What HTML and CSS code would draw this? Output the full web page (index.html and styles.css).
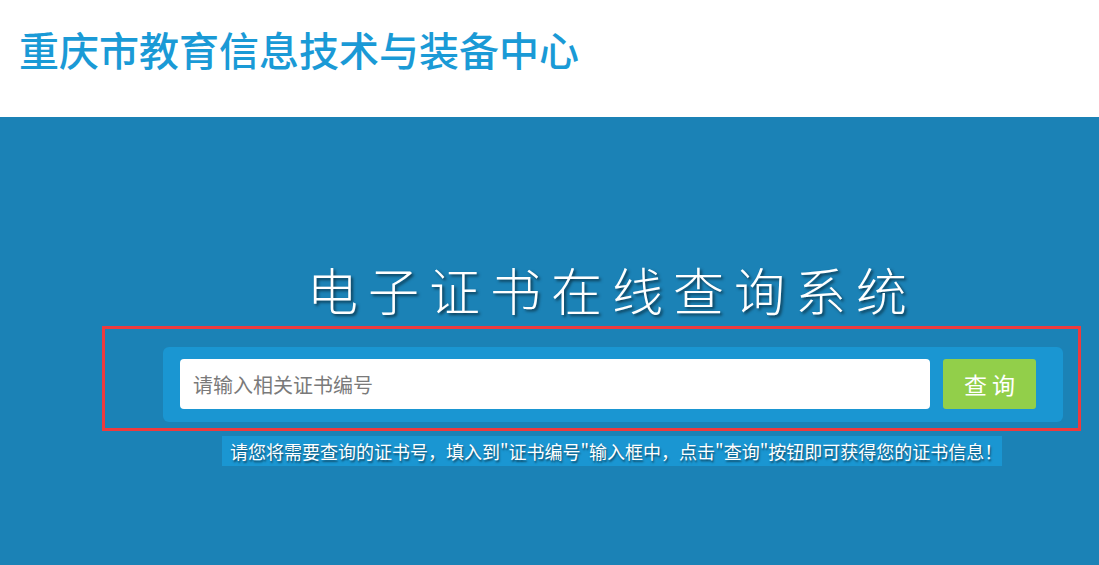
FILE: index.html
```html
<!DOCTYPE html>
<html lang="zh-CN">
<head>
<meta charset="utf-8">
<title>电子证书在线查询系统</title>
<link rel="stylesheet" href="styles.css">
</head>
<body>
<header class="top">
  <h1 class="org">重庆市教育信息技术与装备中心</h1>
</header>
<main class="stage">
  <h2 class="sys-title">电子证书在线查询系统</h2>
  <div class="frame">
    <form class="panel" onsubmit="return false;">
      <input class="search" type="text" placeholder="请输入相关证书编号">
      <button class="btn" type="submit">查 询</button>
    </form>
  </div>
  <p class="hint">请您将需要查询的证书号，填入到"证书编号"输入框中，点击"查询"按钮即可获得您的证书信息！</p>
</main>
</body>
</html>
```
FILE: styles.css
```css
html, body {
  margin: 0;
  padding: 0;
  height: 100%;
}
body {
  font-family: "Noto Sans CJK SC", "Noto Sans", sans-serif;
  background: #1b82b6;
  overflow: hidden;
}
.top {
  background: #ffffff;
  height: 117px;
  display: flex;
  align-items: flex-start;
  padding-left: 19px;
}
.org {
  margin: 21px 0 0;
  font-size: 40px;
  line-height: 56px;
  font-weight: 500;
  color: #1a9ad6;
}
.stage {
  display: flex;
  flex-direction: column;
  align-items: flex-start;
  padding-top: 137px;
}
.sys-title {
  margin: 0 0 2px 307px;
  font-size: 51px;
  line-height: 70px;
  font-weight: 300;
  letter-spacing: 10px;
  color: #ffffff;
  text-shadow: 2px 2px 3px rgba(0, 0, 0, 0.55);
}
.frame {
  margin-left: 102px;
  border: 3px solid #ef3a3d;
  padding: 18px 15px 6px 58px;
}
.panel {
  margin: 0;
  background: #1a96d2;
  border-radius: 6px;
  height: 75px;
  width: 900px;
  box-sizing: border-box;
  padding: 12px 27px 13px 17px;
  display: flex;
  gap: 13px;
}
.search {
  flex: 1;
  height: 50px;
  border: none;
  border-radius: 4px;
  background: #fff;
  padding: 0 13px;
  font-family: inherit;
  font-size: 20px;
  color: #333;
  outline: none;
}
.search::placeholder {
  color: #7a7a7a;
}
.btn {
  width: 93px;
  height: 50px;
  border: none;
  border-radius: 3px;
  background: #92cf4a;
  color: #fff;
  font-family: inherit;
  font-size: 23px;
  padding: 0;
  cursor: pointer;
}
.hint {
  margin: 5px 0 0 222px;
  width: 780px;
  box-sizing: border-box;
  height: 30px;
  line-height: 30px;
  padding-left: 8px;
  background: #1a96d2;
  color: #fff;
  font-size: 18px;
  white-space: nowrap;
  text-shadow: 1px 2px 2px rgba(0, 0, 0, 0.5);
}
```
